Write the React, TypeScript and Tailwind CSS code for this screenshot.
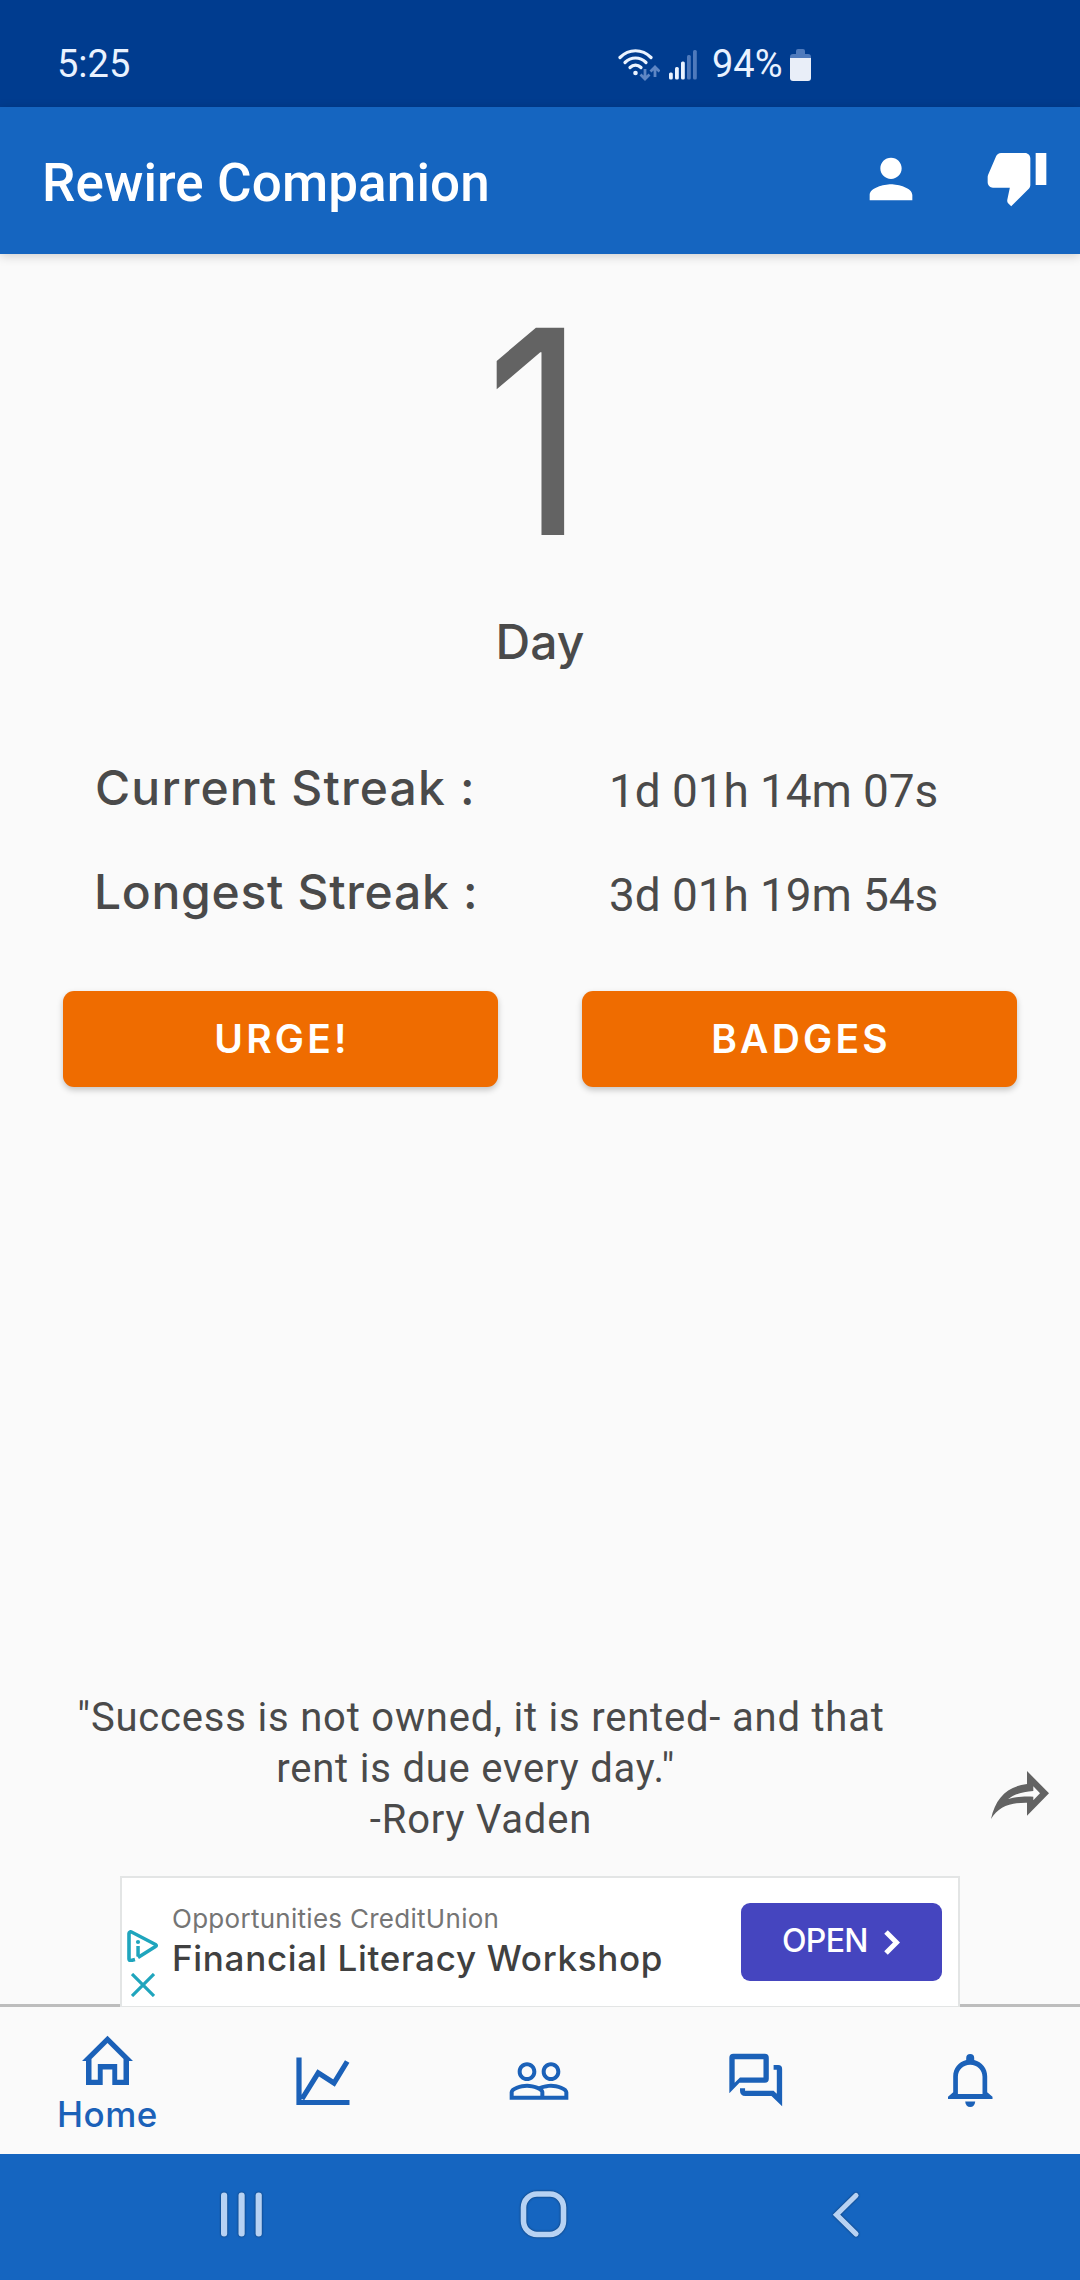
import type { ReactNode } from "react";
import { MdPeopleOutline, MdPerson, MdThumbDown } from "react-icons/md";

const STREAKS = [
  { label: "Current Streak :", value: "1d 01h 14m 07s", tracking: "pl-px tracking-[1.15px]" },
  { label: "Longest Streak :", value: "3d 01h 19m 54s", tracking: "tracking-[0.7px]" },
];

function StatusBar() {
  return (
    <div className="flex h-[107px] items-start bg-[#003c8f] pt-[42px] text-[38px] leading-[44px] text-[#e9f2ff]">
      <span className="ml-[57px] w-[561px]">5:25</span>
      <svg className="mt-[7px] h-8 w-[42px]" viewBox="0 0 42 32" fill="none">
        <g stroke="#eaf3ff" strokeWidth="3.2" strokeLinecap="round">
          <path d="M2 8.5C11-.5 24-.5 33 8.5" />
          <path d="M7 13.5c6-6 15-6 21 0" />
          <path d="M12 18.5c3.3-3.3 7.7-3.3 11 0" />
        </g>
        <circle cx="17.5" cy="24" r="2.3" fill="#eaf3ff" />
        <g stroke="#5e86c4" strokeWidth="2.8">
          <path d="M27 20v9M22.5 25.5 27 30l4.5-4.5" />
          <path d="M37 28v-9M32.5 22.5 37 18l4.5 4.5" />
        </g>
      </svg>
      <svg className="ml-[9px] mt-2 h-[30px] w-7" viewBox="0 0 28 30">
        <g fill="#eaf3ff">
          <rect x="0" y="22.5" width="3.8" height="7" rx="1.5" />
          <rect x="6" y="17" width="3.8" height="12.500" rx="1.5" />
          <rect x="12" y="11.5" width="3.8" height="18" rx="1.5" />
        </g>
        <g fill="#4f7abc">
          <rect x="18" y="5" width="3.8" height="24.5" rx="1.5" />
          <rect x="24" y="0" width="3.8" height="29.5" rx="1.5" />
        </g>
      </svg>
      <span className="ml-[15px] w-[78px]">94%</span>
      <svg className="mt-[7px] h-[33px] w-[21px]" viewBox="0 0 21 33">
        <path
          d="M6 2a2 2 0 0 1 2-2h5a2 2 0 0 1 2 2v3h3a3 3 0 0 1 3 3v2H0V8a3 3 0 0 1 3-3h3z"
          fill="#4f7abc"
        />
        <path d="M0 9h21v20a3 3 0 0 1-3 3H3a3 3 0 0 1-3-3z" fill="#e9eef8" />
      </svg>
    </div>
  );
}

function AppBar() {
  return (
    <header className="relative flex h-[147px] items-start bg-[#1565c0] text-white shadow-[0_2px_10px_rgba(0,0,0,0.18)]">
      <h1 className="ml-[42px] mt-[45px] flex-1 text-[53px] font-medium leading-[62px] tracking-[0.1px]">
        Rewire Companion
      </h1>
      <MdPerson className="mt-10 size-16" />
      <MdThumbDown className="ml-[62px] mr-[31px] mt-[38px] size-16" />
    </header>
  );
}

function ActionButton({ children }: { children: ReactNode }) {
  return (
    <button className="h-24 w-[435px] rounded-[11px] bg-[#ef6c00] pl-[3px] pt-px font-[Inter,sans-serif] text-[39px] font-semibold tracking-[3.2px] text-white shadow-[0_3px_6px_rgba(0,0,0,0.22)]">
      {children}
    </button>
  );
}

function AdBanner() {
  return (
    <div className="flex items-end">
      <div className="h-[3px] flex-1 bg-[#bdbdbd]" />
      <div className="flex h-[131px] w-[840px] border-2 border-b border-[#e3e5e5] bg-white font-[Inter,sans-serif]">
        <div className="ml-[5px] mt-[52px] flex w-[45px] flex-col gap-[11px]">
          <svg className="h-8 w-[31px]" viewBox="0 0 31 32" fill="none">
            <path
              d="M8 29.5 4 30.5c-1 .3-2-.5-2-1.5V3.5C2 2 3.5 1.5 4.5 2l24 12.5c1 .6 1 1.5 0 2L11 27.5"
              stroke="#1fa5bd"
              strokeWidth="3.6"
              strokeLinejoin="round"
            />
            <circle cx="11" cy="12" r="2.1" fill="#1fa5bd" />
            <path d="M9.3 16h3.5v10.5H9.3z" fill="#1fa5bd" />
          </svg>
          <svg className="ml-1 size-6" viewBox="0 0 24 24">
            <path d="m1 1 22 22M23 1 1 23" stroke="#1fa5bd" strokeWidth="3.2" />
          </svg>
        </div>
        <div className="flex-1 pt-[23px]">
          <div className="text-[26px] leading-9 tracking-[0.28px] text-[#757575]">
            Opportunities CreditUnion
          </div>
          <div className="-mt-px text-[35px] font-medium leading-[44px] tracking-[0.7px] text-[#404040]">
            Financial Literacy Workshop
          </div>
        </div>
        <button className="mr-4 mt-[25px] flex h-[78px] w-[201px] items-center rounded-[9px] bg-[#4545bf] pb-[3px] pl-[41px] text-[32px] font-medium text-white">
          <span className="w-[102px] text-left tracking-[-0.7px]">OPEN</span>
          <svg className="mt-1 h-[25px] w-4" viewBox="0 0 16 25" fill="none">
            <path d="m2 2 10.5 10.5L2 23" stroke="#fff" strokeWidth="5" />
          </svg>
        </button>
      </div>
      <div className="h-[3px] flex-1 bg-[#bdbdbd]" />
    </div>
  );
}

function BottomNav() {
  return (
    <nav className="flex h-[147px] bg-[#fafafa] text-[#1b61b8]">
      <div className="flex flex-1 flex-col items-center pt-7">
        <svg className="h-[50px] w-[51px]" viewBox="0 0 51 50" fill="currentColor">
          <path
            fillRule="evenodd"
            d="M25.5.7 51 26h-4v24H30.3V34.5h-9.6V50H4V26H0zm0 7.3L9.5 24v20.8h6.3V29h19.4v15.8h6.3V24z"
          />
        </svg>
        <span className="mt-2 font-[Inter,sans-serif] text-[35px] font-medium leading-[42px] tracking-[0.5px]">
          Home
        </span>
      </div>
      <div className="flex flex-1 justify-center pt-[50px]">
        <svg className="h-12 w-[54px]" viewBox="0 0 54 48" fill="none">
          <path
            d="M3 .5V45.500h50.500M6 42l16.200-26.200L38 26l13.200-21.500"
            stroke="currentColor"
            strokeWidth="5.2"
          />
        </svg>
      </div>
      <div className="flex flex-1 justify-center pl-px pt-[42px]">
        <MdPeopleOutline className="size-16" />
      </div>
      <div className="flex flex-1 justify-center pl-[2px] pt-[41px]">
        <svg className="size-16" viewBox="0 0 24 24" fill="currentColor">
          <path
            fillRule="evenodd"
            d="M3.5 2.2h11.8q1.5 0 1.5 1.5v7.8q0 1.5-1.5 1.5H5.8L2 17V3.7q0-1.5 1.5-1.5zm.5 2V13l2-1.900H14.8V4.200z"
          />
          <path d="M18.6 6.400h1.700q1.500 0 1.500 1.500v13.900L17.8 18H8q-2-.1-2-2v-.9h1.900v.9h10.700l1.200 1.200v-9h-1.200z" />
        </svg>
      </div>
      <div className="flex flex-1 justify-center pr-[2px] pt-[47px]">
        <svg className="h-[53px] w-[45px]" viewBox="0 0 45 53" fill="currentColor">
          <path
            fillRule="evenodd"
            d="M18.2 6V4a4 4 0 0 1 8 0v2C34 8 39.2 14.5 39.2 22.5v15.7l5.3 4.6V45H0v-2.2l5.2-4.6V22.5C5.2 14.5 10.4 8 18.2 6zm4 4.8c-7 0-12.3 5-12.3 12V40h24.6V22.8c0-7-5.3-12-12.3-12z"
          />
          <path d="M17.2 47.5h10c-.2 3.5-2 5.5-5 5.5s-4.8-2-5-5.5z" />
        </svg>
      </div>
    </nav>
  );
}

function SystemNav() {
  return (
    <div className="flex h-[126px] items-start bg-[#1565c0] pt-[35px]">
      <svg
        className="ml-[219px] h-[50px] w-[46px] drop-shadow-[0_0_1px_rgba(0,0,0,0.5)]"
        viewBox="0 0 46 50"
      >
        <g fill="#b7d2f3">
          <rect x="2" y="3.5" width="6.2" height="44" rx="3" />
          <rect x="19.5" y="3.5" width="6.2" height="44" rx="3" />
          <rect x="36.6" y="3.5" width="6.2" height="44" rx="3" />
        </g>
      </svg>
      <svg
        className="ml-[253px] h-[50px] w-[50px] drop-shadow-[0_0_1px_rgba(0,0,0,0.5)]"
        viewBox="0 0 50 50"
        fill="none"
      >
        <rect x="5.5" y="5" width="40" height="40.5" rx="13.5" stroke="#b7d2f3" strokeWidth="5.6" />
      </svg>
      <svg
        className="ml-[262px] h-[50px] w-[34px] drop-shadow-[0_0_1px_rgba(0,0,0,0.5)]"
        viewBox="0 0 34 50"
        fill="none"
      >
        <path
          d="M26 6.5 6.5 25.7 26 44.9"
          stroke="#b7d2f3"
          strokeWidth="5.2"
          strokeLinecap="round"
        />
      </svg>
    </div>
  );
}

export default function App() {
  return (
    <div className="flex h-[2280px] w-[1080px] flex-col overflow-hidden bg-[#fafafa] font-[Roboto,sans-serif]">
      <StatusBar />
      <AppBar />

      <main className="flex flex-1 flex-col text-[#4a4a4a]">
        <div className="pt-[58px] text-center font-[Inter,sans-serif]">
          <div className="-ml-[9px] scale-x-[0.87] text-[285px] leading-[240px] text-[#636363]">
            1
          </div>
          <div className="mt-[60px] text-[48px] font-medium leading-[60px]">Day</div>
        </div>

        <div className="mt-[86px] flex flex-col gap-11">
          {STREAKS.map((s) => (
            <div key={s.label} className="flex h-[60px] leading-[60px]">
              <div className="ml-[94px] w-[515px] font-[Inter,sans-serif] text-[48px] font-medium">
                <span className={s.tracking}>{s.label}</span>
              </div>
              <div className="pt-[3px] text-[46px] tracking-[-0.1px]">{s.value}</div>
            </div>
          ))}
        </div>

        <div className="mt-[69px] flex justify-between px-[63px]">
          <ActionButton>URGE!</ActionButton>
          <ActionButton>BADGES</ActionButton>
        </div>

        <div className="mb-[31px] mt-auto flex items-start">
          <p className="ml-[60px] w-[842px] text-center text-[40px] leading-[51px] tracking-[0.8px]">
            "Success is not owned, it is rented- and that
            <br />
            rent is due every day."&nbsp;
            <br />
            -Rory Vaden
          </p>
          <svg className="ml-[89px] mt-[79px] h-12 w-[58px]" viewBox="0 0 58 48">
            <path
              fillRule="evenodd"
              d="M36 0l22 22.3L36 44.7v-13C18 31.500 7.500 36 0 48 4.500 27 16 15.500 36 13zM42.300 15.300V20C32 20.700 23 23 17.300 28c7.700-2.300 15-2.600 25-2.300v3.600l6.700-7z"
              fill="#636363"
            />
          </svg>
        </div>
        <AdBanner />
      </main>

      <BottomNav />
      <SystemNav />
    </div>
  );
}
